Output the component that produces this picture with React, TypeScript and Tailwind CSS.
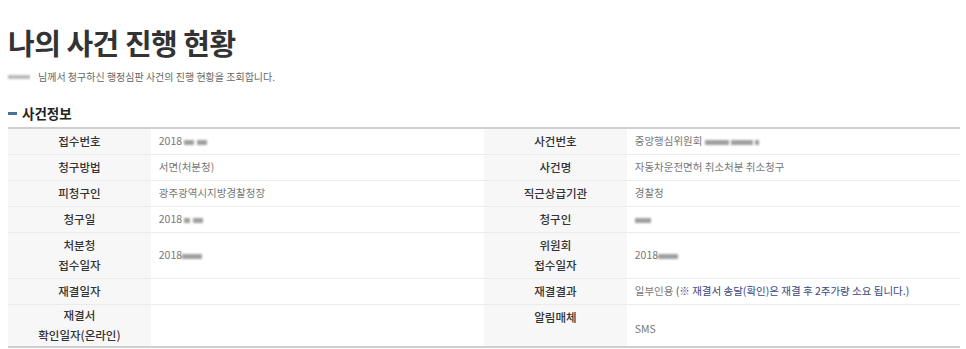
const font = { fontFamily: '"Noto Sans CJK KR", "Noto Sans", sans-serif' }

function Blur({ w }: { w: number }) {
  return (
    <span
      className="inline-block h-[5px] align-middle bg-[#777] blur-[1px] opacity-70"
      style={{ width: w }}
    />
  )
}

const th = 'bg-[#f7f7f7] text-[#333] font-medium text-[11.5px] text-center align-middle leading-[20px]'
const td = 'text-[#777] text-[10.5px] px-2 align-middle'

export default function App() {
  return (
    <main className="bg-white w-[966px] h-[349px] px-2 pt-[22px] overflow-hidden" style={font}>
      <h1 className="text-[29px] font-bold text-[#333] leading-[40px] tracking-[-0.5px]">
        나의 사건 진행 현황
      </h1>
      <p className="mt-[9px] text-[10px] text-[#666] leading-[12px] flex items-center gap-2">
        <span className="inline-block w-[22px] h-[4px] bg-[#bbb] blur-[1px]" />
        님께서 청구하신 행정심판 사건의 진행 현황을 조회합니다.
      </p>

      <h2 className="mt-[21px] flex items-center gap-[5px] text-[13.5px] font-bold text-[#222] leading-[18px]">
        <span className="inline-block w-[9px] h-[3px] bg-[#4e6f96]" />
        사건정보
      </h2>

      <table className="mt-[5px] w-[952px] table-fixed border-collapse border-t-2 border-b-2 border-[#cfcfcf]">
        <colgroup>
          <col className="w-[15%]" />
          <col className="w-[35%]" />
          <col className="w-[15%]" />
          <col className="w-[35%]" />
        </colgroup>
        <tbody>
          <tr className="h-[26px] border-b border-[#ebebeb]">
            <th className={th}>접수번호</th>
            <td className={td}>
              2018 <Blur w={10} /> <Blur w={10} />
            </td>
            <th className={th}>사건번호</th>
            <td className={td}>
              중앙행심위원회 <Blur w={24} /> <Blur w={22} /> <Blur w={4} />
            </td>
          </tr>
          <tr className="h-[26px] border-b border-[#ebebeb]">
            <th className={th}>청구방법</th>
            <td className={td}>서면(처분청)</td>
            <th className={th}>사건명</th>
            <td className={td}>자동차운전면허 취소처분 취소청구</td>
          </tr>
          <tr className="h-[26px] border-b border-[#ebebeb]">
            <th className={th}>피청구인</th>
            <td className={td}>광주광역시지방경찰청장</td>
            <th className={th}>직근상급기관</th>
            <td className={td}>경찰청</td>
          </tr>
          <tr className="h-[26px] border-b border-[#ebebeb]">
            <th className={th}>청구일</th>
            <td className={td}>
              2018 <Blur w={6} /> <Blur w={10} />
            </td>
            <th className={th}>청구인</th>
            <td className={td}>
              <Blur w={16} />
            </td>
          </tr>
          <tr className="h-[46px] border-b border-[#ebebeb]">
            <th className={th}>
              처분청
              <br />
              접수일자
            </th>
            <td className={td}>
              2018<Blur w={20} />
            </td>
            <th className={th}>
              위원회
              <br />
              접수일자
            </th>
            <td className={td}>
              2018<Blur w={20} />
            </td>
          </tr>
          <tr className="h-[26px] border-b border-[#ebebeb]">
            <th className={th}>재결일자</th>
            <td className={td}></td>
            <th className={th}>재결결과</th>
            <td className={td}>
              일부인용 <span className="text-[#3a4580]">(※ 재결서 송달(확인)은 재결 후 2주가량 소요 됩니다.)</span>
            </td>
          </tr>
          <tr className="h-[43px]">
            <th className={th}>
              재결서
              <br />
              확인일자(온라인)
            </th>
            <td className={td}></td>
            <th className={`${th} !align-top pt-[2px]`}>알림매체</th>
            <td className={`${td} pt-[8px]`}>SMS</td>
          </tr>
        </tbody>
      </table>
    </main>
  )
}
